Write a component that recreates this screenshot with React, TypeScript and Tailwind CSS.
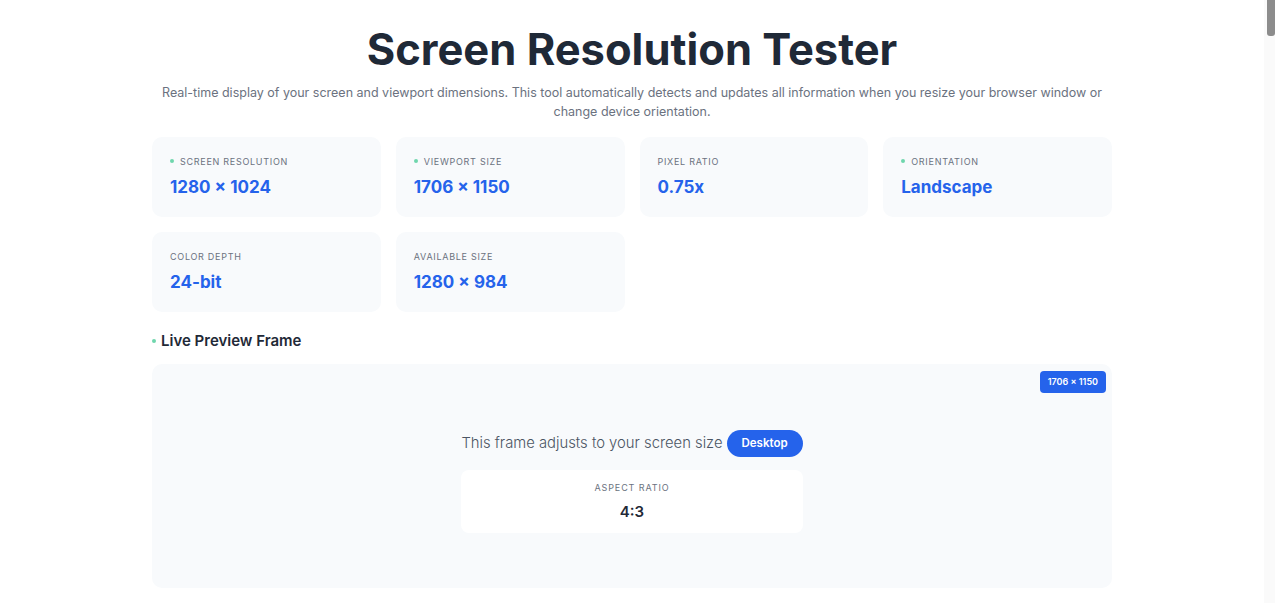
import React from "react";

const font = { fontFamily: "Inter, 'Noto Sans', sans-serif" };

function StatCard({ label, value, dot }: { label: string; value: string; dot?: boolean }) {
  return (
    <div className="bg-[#f8fafc] rounded-[10px] h-[80px] px-[18px] pt-[19px]">
      <div className="flex items-center gap-[6px] h-[10px]">
        {dot && <span className="w-[4px] h-[4px] rounded-full bg-[#6fd6ad]" />}
        <span className="text-[9px] uppercase tracking-[0.08em] text-[#6b7280] leading-none">{label}</span>
      </div>
      <div className="mt-[13px] text-[17px] font-bold text-[#2563eb] leading-none">{value}</div>
    </div>
  );
}

export default function App() {
  return (
    <div className="bg-white min-h-screen" style={font}>
      {/* page scrollbar */}
      <div className="fixed top-0 right-0 w-[11px] h-screen bg-[#fafafa]">
        <div className="ml-[3px] w-[8px] h-[36px] bg-[#8c8c8c] rounded-b-[3px]" />
      </div>

      <div className="mr-[11px]">
        <div className="w-[960px] mx-auto pt-[25px]">
          <h1 className="text-center text-[43.5px] font-bold text-[#1f2937] leading-[48px]">
            Screen Resolution Tester
          </h1>
          <p className="mt-[10px] text-center text-[12.5px] leading-[19px] text-[#6b7280] px-[8px]">
            Real-time display of your screen and viewport dimensions. This tool automatically detects and updates all information when you resize your browser window or change device orientation.
          </p>

          <div className="mt-[16px] grid grid-cols-4 gap-[15px]">
            <StatCard label="Screen Resolution" value="1280 × 1024" dot />
            <StatCard label="Viewport Size" value="1706 × 1150" dot />
            <StatCard label="Pixel Ratio" value="0.75x" />
            <StatCard label="Orientation" value="Landscape" dot />
            <StatCard label="Color Depth" value="24-bit" />
            <StatCard label="Available Size" value="1280 × 984" />
          </div>

          <div className="mt-[20px] flex items-center gap-[5px]">
            <span className="w-[4px] h-[4px] rounded-full bg-[#6fd6ad]" />
            <h2 className="text-[15px] font-semibold text-[#1f2937] leading-[18px]">Live Preview Frame</h2>
          </div>

          <div className="relative mt-[14px] h-[224px] bg-[#f8fafc] rounded-[10px] flex justify-center pt-[66px]">
            <span className="absolute top-[7px] right-[6px] bg-[#2563eb] text-white text-[9px] font-semibold rounded-[4px] px-[8px] h-[22px] flex items-center">
              1706 × 1150
            </span>
            <div className="flex flex-col">
              <div className="flex items-center gap-[4px]">
                <span className="text-[14.8px] font-light text-[#4b5563]">This frame adjusts to your screen size</span>
                <span className="bg-[#2563eb] text-white text-[11.5px] font-semibold rounded-full h-[27px] px-[15px] flex items-center">
                  Desktop
                </span>
              </div>
              <div className="mt-[13px] bg-white rounded-[8px] h-[63px] flex flex-col items-center pt-[13px]">
                <span className="text-[9px] uppercase tracking-[0.1em] text-[#6b7280] leading-none">Aspect Ratio</span>
                <span className="mt-[12px] text-[15px] font-semibold text-[#1f2937] leading-none">4:3</span>
              </div>
            </div>
          </div>

          <div className="h-[9500px]" />
        </div>
      </div>
    </div>
  );
}
